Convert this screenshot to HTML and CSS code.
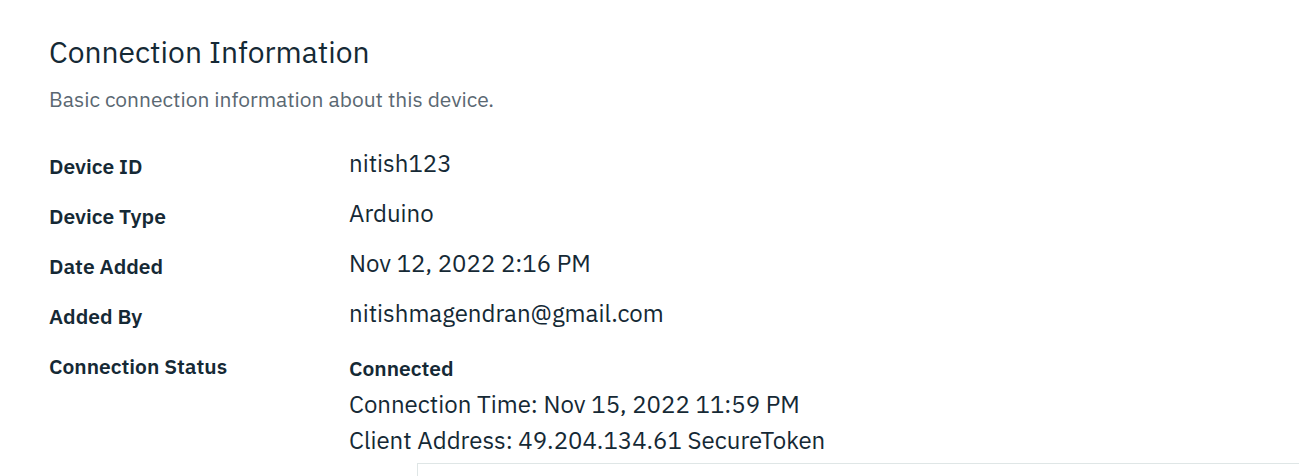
FILE: index.html
```html
<!DOCTYPE html>
<html lang="en">
<head>
<meta charset="utf-8">
<title>Connection Information</title>
<link rel="stylesheet" href="styles.css">
</head>
<body>
<main class="page">
  <header class="intro">
    <h1 class="title">Connection Information</h1>
    <p class="subtitle">Basic connection information about this device.</p>
  </header>
  <dl class="details">
    <div class="row"><dt class="label">Device ID</dt><dd class="value">nitish123</dd></div>
    <div class="row"><dt class="label">Device Type</dt><dd class="value">Arduino</dd></div>
    <div class="row"><dt class="label">Date Added</dt><dd class="value">Nov 12, 2022 2:16 PM</dd></div>
    <div class="row"><dt class="label">Added By</dt><dd class="value">nitishmagendran@gmail.com</dd></div>
    <div class="row"><dt class="label">Connection Status</dt>
      <dd class="value status">
        <strong class="state">Connected</strong>
        <span>Connection Time: Nov 15, 2022 11:59 PM</span>
        <span>Client Address: 49.204.134.61 SecureToken</span>
      </dd>
    </div>
  </dl>
</main>
<div class="panel"></div>
</body>
</html>
```
FILE: styles.css
```css
body {
  margin: 0;
  background: #fff;
  color: #152935;
  font-family: "IBM Plex Sans", "Open Sans", "Noto Sans", sans-serif;
  overflow: hidden;
}
.page {
  padding: 32px 48px 0 49px;
}
.title {
  margin: 0;
  font-size: 30px;
  line-height: 40px;
  font-weight: 400;
}
.subtitle {
  margin: 11px 0 0;
  color: #5a6872;
  font-size: 21px;
  line-height: 32px;
  font-weight: 400;
}
.details {
  display: grid;
  gap: 13px;
  margin: 30px 0 0;
}
.row {
  display: grid;
  grid-template-columns: 300px 1fr;
}
.label {
  padding-top: 5px;
  font-size: 21px;
  line-height: 32px;
  font-weight: 600;
}
.value {
  margin: 0;
  font-size: 24px;
  line-height: 36px;
}
.status {
  display: grid;
  padding-top: 5px;
}
.state {
  font-size: 21px;
  font-weight: 600;
}
.panel {
  position: absolute;
  top: 463px;
  left: 417px;
  right: 0;
  bottom: 0;
  border: 1px solid #dfe6e6;
  border-width: 1px 0 0 1px;
  background: #fff;
}
```
